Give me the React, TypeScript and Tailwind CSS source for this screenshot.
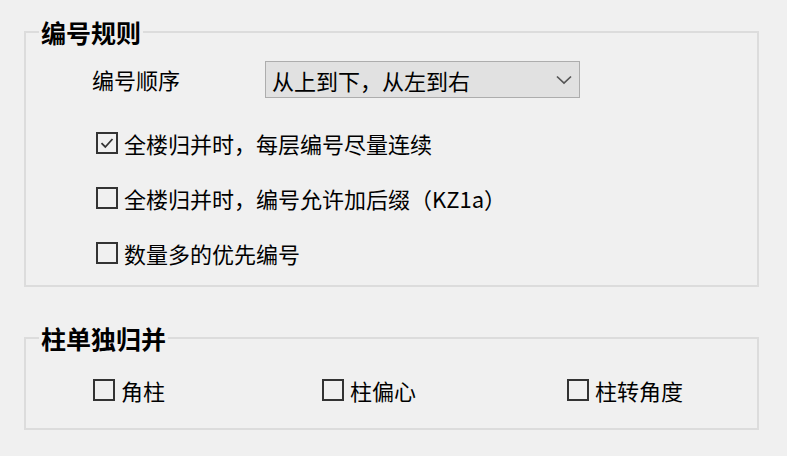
const FONT = "font-['Noto_Sans_CJK_SC','Noto_Sans',sans-serif]"

function Box({ checked }: { checked?: boolean }) {
  return (
    <span className="flex h-[22px] w-[22px] shrink-0 items-center justify-center border-2 border-[#333] bg-[#f0f0f0]">
      {checked && (
        <svg width="16" height="16" viewBox="0 0 16 16" fill="none">
          <path d="M2.5 8.2 L6.3 12 L13.5 4" stroke="#333" strokeWidth="1.8" />
        </svg>
      )}
    </span>
  )
}

function Check({ label, checked, className }: { label: React.ReactNode; checked?: boolean; className?: string }) {
  return (
    <label className={`flex h-[30px] items-center gap-[6px] ${className ?? ''}`}>
      <Box checked={checked} />
      <span className="whitespace-nowrap text-[22px] leading-[30px] text-black">{label}</span>
    </label>
  )
}

function Group({ title, className, children }: { title: string; className?: string; children: React.ReactNode }) {
  return (
    <fieldset className={`border-2 border-[#dcdcdc] px-0 ${className ?? ''}`}>
      <legend className="ml-[13px] px-[2px] text-[25px] font-bold leading-[30px] text-black">{title}</legend>
      {children}
    </fieldset>
  )
}

export default function App() {
  return (
    <div className={`h-[456px] w-[787px] overflow-hidden bg-[#f0f0f0] px-[24px] pt-[17px] ${FONT}`}>
      <div className="w-[735px]">
        <Group title="编号规则" className="pb-[17px]">
          <div className="mt-[14px] flex items-center">
            <span className="ml-[66px] w-[173px] text-[22px] text-black">编号顺序</span>
            <div className="flex h-[37px] w-[315px] items-center justify-between border border-[#adadad] bg-[#e1e1e1] pl-[6px] pr-[7px]">
              <span className="text-[22px] leading-none text-black">从上到下，从左到右</span>
              <svg width="16" height="10" viewBox="0 0 16 10" fill="none">
                <path d="M1 1.5 L8 8 L15 1.5" stroke="#555" strokeWidth="1.7" />
              </svg>
            </div>
          </div>
          <div className="ml-[70px] mt-[30px] flex flex-col gap-[25px]">
            <Check checked label="全楼归并时，每层编号尽量连续" />
            <Check label="全楼归并时，编号允许加后缀（KZ1a）" />
            <Check label="数量多的优先编号" />
          </div>
        </Group>

        <Group title="柱单独归并" className="mt-[36px] pb-[23px]">
          <div className="mt-[22px] flex items-center">
            <Check label="角柱" className="ml-[67px] w-[229px]" />
            <Check label="柱偏心" className="w-[245px]" />
            <Check label="柱转角度" />
          </div>
        </Group>
      </div>
    </div>
  )
}
